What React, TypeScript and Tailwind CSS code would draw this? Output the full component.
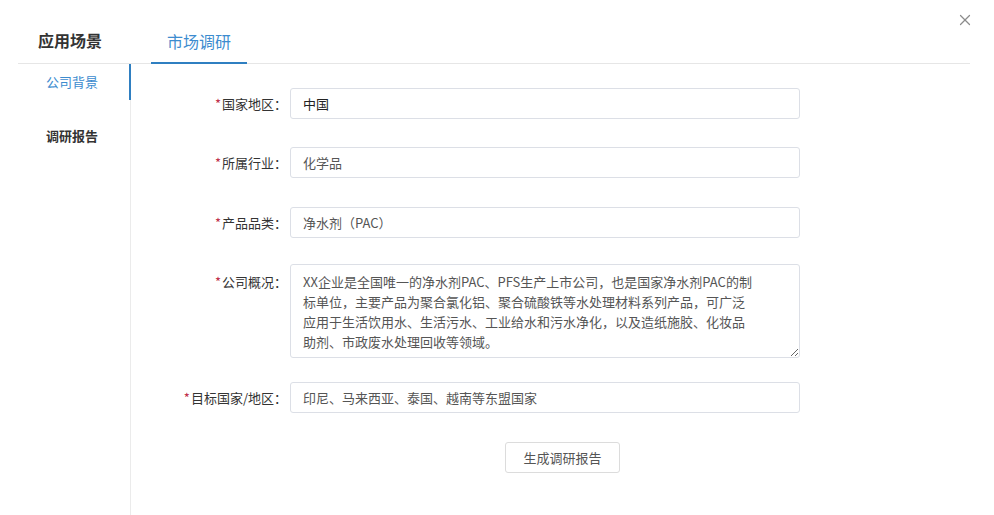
import { X } from "lucide-react";

const fields = [
  { label: "国家地区", value: "中国", dark: true, mt: "mt-[24px]" },
  { label: "所属行业", value: "化学品", mt: "mt-[28px]" },
  { label: "产品品类", value: "净水剂（PAC）", mt: "mt-[29px]" },
];

const overview =
  "XX企业是全国唯一的净水剂PAC、PFS生产上市公司，也是国家净水剂PAC的制\n标单位，主要产品为聚合氯化铝、聚合硫酸铁等水处理材料系列产品，可广泛\n应用于生活饮用水、生活污水、工业给水和污水净化，以及造纸施胶、化妆品\n助剂、市政废水处理回收等领域。";

function Label({ text }: { text: string }) {
  return (
    <label className="block w-[159px] shrink-0 pr-[3px] text-right text-[13px] leading-[20px] text-[#333]">
      <span className="mr-[1px] text-[#c0304a]">*</span>
      {text}：
    </label>
  );
}

export default function App() {
  return (
    <div
      className="relative h-[515px] w-[994px] overflow-hidden bg-white"
      style={{ fontFamily: '"Noto Sans CJK SC", "Noto Sans", sans-serif' }}
    >
      <button
        type="button"
        className="absolute right-[20px] top-[11px] text-[#8c8c8c] hover:text-[#555]"
      >
        <X className="h-[18px] w-[18px]" strokeWidth={1.6} />
      </button>

      {/* header */}
      <div className="ml-[18px] mr-[24px] flex h-[64px] items-stretch border-b border-[#e6e6e6]">
        <div className="flex w-[133px] items-end pb-[11px] pl-[20px] text-[16px] font-bold text-[#333]">
          应用场景
        </div>
        <div className="-mb-px flex w-[96px] items-end justify-center border-b-2 border-[#2f7fc1] pb-[9px] text-[16px] text-[#3d8ccf]">
          市场调研
        </div>
      </div>

      <div className="flex h-[451px]">
        {/* sidebar */}
        <aside className="ml-[18px] w-[113px] shrink-0 border-r border-[#ebebeb]">
          <div className="-mr-px flex h-[36px] items-center border-r-2 border-[#2f7fc1] pl-[28px] text-[13px] text-[#3d8ccf]">
            公司背景
          </div>
          <div className="mt-[18px] flex h-[36px] items-center pl-[28px] text-[13px] font-bold text-[#333]">
            调研报告
          </div>
        </aside>

        {/* form */}
        <main className="flex-1">
          {fields.map((f) => (
            <div key={f.label} className={`flex items-center ${f.mt}`}>
              <Label text={f.label} />
              <input
                defaultValue={f.value}
                className={`h-[31px] w-[510px] shrink-0 rounded-[3px] border border-[#dcdfe6] px-[12px] text-[13px] outline-none ${
                  f.dark ? "text-[#222]" : "text-[#555]"
                }`}
              />
            </div>
          ))}

          <div className="mt-[26px] flex items-start">
            <div className="w-[159px] shrink-0 pt-[8px]">
              <Label text="公司概况" />
            </div>
            <textarea
              defaultValue={overview}
              className="h-[94px] w-[510px] shrink-0 resize-y overflow-hidden whitespace-pre rounded-[3px] border border-[#dcdfe6] px-[12px] py-[7px] text-[13px] leading-[20px] text-[#555] outline-none"
            />
          </div>

          <div className="mt-[24px] flex items-center">
            <Label text="目标国家/地区" />
            <input
              defaultValue="印尼、马来西亚、泰国、越南等东盟国家"
              className="h-[31px] w-[510px] shrink-0 rounded-[3px] border border-[#dcdfe6] px-[12px] text-[13px] text-[#555] outline-none"
            />
          </div>

          <div className="mt-[29px] pl-[374px]">
            <button
              type="button"
              className="h-[31px] w-[115px] rounded-[3px] border border-[#dcdcdc] bg-white text-[13px] text-[#555] hover:bg-[#f5f5f5]"
            >
              生成调研报告
            </button>
          </div>
        </main>
      </div>
    </div>
  );
}
